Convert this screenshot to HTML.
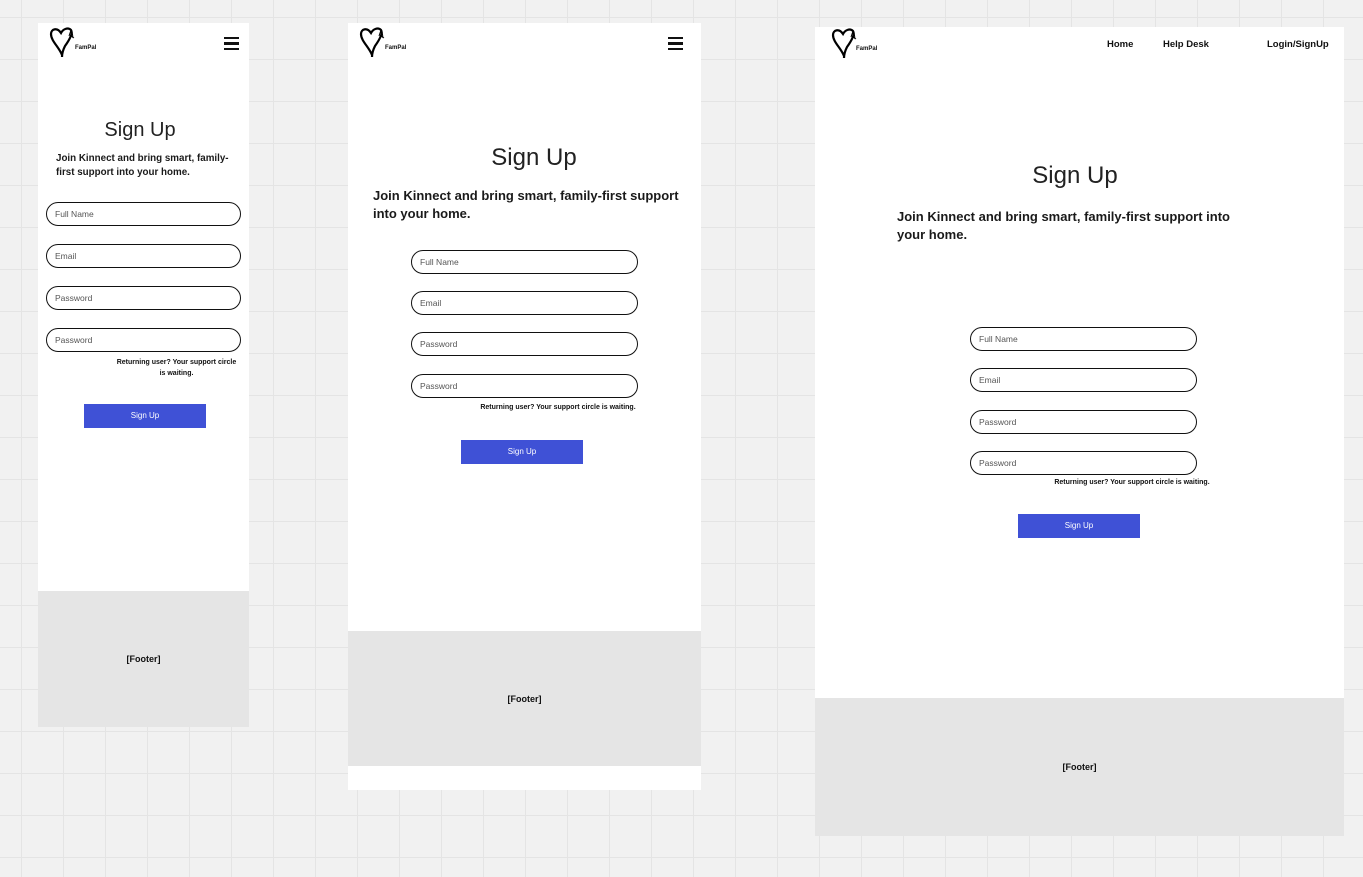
<!DOCTYPE html>
<html><head><meta charset="utf-8"><style>
*{margin:0;padding:0;box-sizing:border-box}
body{width:1363px;height:877px;overflow:hidden;position:relative;font-family:"Liberation Sans",sans-serif;color:#111;
background-color:#f1f1f1;
background-image:linear-gradient(to right,#e4e4e4 1px,transparent 1px),linear-gradient(to bottom,#e4e4e4 1px,transparent 1px);
background-size:42px 42px;background-position:21px 17px}
.a{position:absolute}
.p{position:absolute;background:#fff}
.f{position:absolute;background:#e5e5e5;display:flex;align-items:center;justify-content:center;font-size:9px;font-weight:bold}
.in{position:absolute;height:24px;border:1.3px solid #111;border-radius:12px;font-size:8.5px;color:#555;padding-left:8px;line-height:22px;background:#fff}
.btn{position:absolute;width:122px;height:24px;background:#3f51d6;color:#fff;font-size:8px;text-align:center;line-height:24px}
.ret{position:absolute;font-size:7px;font-weight:bold;text-align:center;white-space:nowrap}
.h{position:absolute;font-size:22px;text-align:center;white-space:nowrap;font-weight:normal;color:#222}
.t{position:absolute;font-weight:bold;white-space:nowrap;color:#1a1a1a}
.hb{position:absolute;width:15px;height:13px;border-top:2.5px solid #111;border-bottom:2.5px solid #111}
.hb:after{content:"";position:absolute;left:0;right:0;top:3px;height:2.5px;background:#111}
.nav{position:absolute;font-size:9.5px;font-weight:bold;top:39px}
</style></head><body>

<svg width="0" height="0" style="position:absolute"><defs><g id="lg"><path d="M13 28 C10 20 2 14 2 7 C2 2 8 0 12 6 C14 2 19 0 22 3 C24 6 21 12 16 19 C14 23 13 26 13 30" fill="none" stroke="#000" stroke-width="2.2"/><path d="M20 9 l2 -6 M23 4 l1 7 M22 9 l3 2" stroke="#000" stroke-width="1" fill="none"/></g></defs></svg>

<!-- Panel 1 -->
<div class="p" style="left:38px;top:23px;width:211px;height:704px"></div>
<svg class="a" style="left:49px;top:27px" width="32" height="32"><use href="#lg"/></svg>
<div class="a" style="left:75px;top:45px;font-size:6px;font-weight:bold">FamPal</div>
<div class="hb" style="left:224px;top:37px"></div>
<div class="h" style="left:40px;width:200px;top:119px;font-size:20px">Sign Up</div>
<div class="t" style="left:56px;top:152px;font-size:9.8px;line-height:13.5px">Join Kinnect and bring smart, family-<br>first support into your home.</div>
<div class="in" style="left:46px;top:202px;width:195px">Full Name</div>
<div class="in" style="left:46px;top:244px;width:195px">Email</div>
<div class="in" style="left:46px;top:286px;width:195px">Password</div>
<div class="in" style="left:46px;top:328px;width:195px">Password</div>
<div class="ret" style="left:108px;width:137px;top:358px;line-height:10.5px">Returning user? Your support circle<br>is waiting.</div>
<div class="btn" style="left:84px;top:404px">Sign Up</div>
<div class="f" style="left:38px;top:591px;width:211px;height:136px">[Footer]</div>

<!-- Panel 2 -->
<div class="p" style="left:348px;top:23px;width:353px;height:767px"></div>
<svg class="a" style="left:359px;top:27px" width="32" height="32"><use href="#lg"/></svg>
<div class="a" style="left:385px;top:45px;font-size:6px;font-weight:bold">FamPal</div>
<div class="hb" style="left:668px;top:37px"></div>
<div class="h" style="left:434px;width:200px;top:144px;font-size:24px">Sign Up</div>
<div class="t" style="left:373px;top:187px;font-size:13px;line-height:18px">Join Kinnect and bring smart, family-first support<br>into your home.</div>
<div class="in" style="left:411px;top:250px;width:227px">Full Name</div>
<div class="in" style="left:411px;top:291px;width:227px">Email</div>
<div class="in" style="left:411px;top:332px;width:227px">Password</div>
<div class="in" style="left:411px;top:374px;width:227px">Password</div>
<div class="ret" style="left:468px;width:180px;top:404px">Returning user? Your support circle is waiting.</div>
<div class="btn" style="left:461px;top:440px">Sign Up</div>
<div class="f" style="left:348px;top:631px;width:353px;height:135px">[Footer]</div>

<!-- Panel 3 -->
<div class="p" style="left:815px;top:27px;width:529px;height:809px"></div>
<svg class="a" style="left:831px;top:28px" width="32" height="32"><use href="#lg"/></svg>
<div class="a" style="left:856px;top:46px;font-size:6px;font-weight:bold">FamPal</div>
<div class="nav" style="left:1107px">Home</div>
<div class="nav" style="left:1163px">Help Desk</div>
<div class="nav" style="left:1267px">Login/SignUp</div>
<div class="h" style="left:975px;width:200px;top:162px;font-size:24px">Sign Up</div>
<div class="t" style="left:897px;top:208px;font-size:13px;line-height:18px">Join Kinnect and bring smart, family-first support into<br>your home.</div>
<div class="in" style="left:970px;top:327px;width:227px">Full Name</div>
<div class="in" style="left:970px;top:368px;width:227px">Email</div>
<div class="in" style="left:970px;top:410px;width:227px">Password</div>
<div class="in" style="left:970px;top:451px;width:227px">Password</div>
<div class="ret" style="left:1042px;width:180px;top:479px">Returning user? Your support circle is waiting.</div>
<div class="btn" style="left:1018px;top:514px">Sign Up</div>
<div class="f" style="left:815px;top:698px;width:529px;height:138px">[Footer]</div>
</body></html>
